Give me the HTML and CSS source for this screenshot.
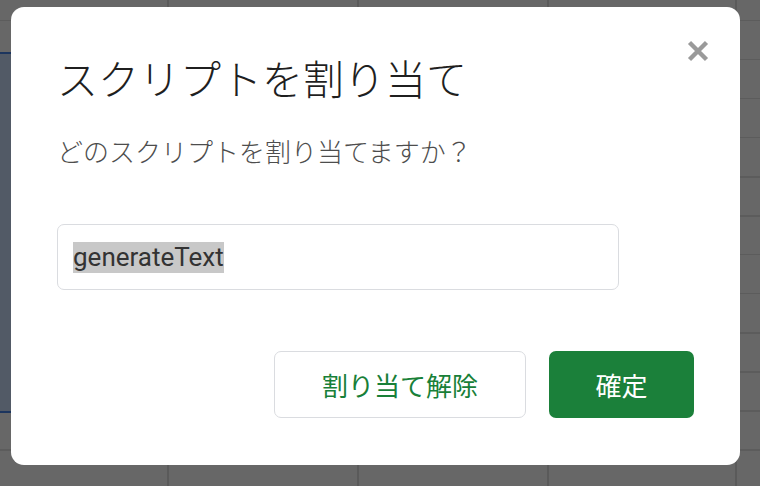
FILE: index.html
```html
<!DOCTYPE html>
<html lang="ja">
<head>
<meta charset="utf-8">
<link rel="stylesheet" href="styles.css">
</head>
<body>
<div class="sheet">
  <div class="sheet-blue"></div>
</div>
<div class="dialog">
  <button class="close" aria-label="閉じる">
    <svg width="24" height="24" viewBox="0 0 24 24"><path d="M3.5 3.5 L20.5 20.5 M20.5 3.5 L3.5 20.5" stroke="#9a9a9a" stroke-width="4.4" stroke-linecap="butt"/></svg>
  </button>
  <h1 class="title">スクリプトを割り当て</h1>
  <p class="question">どのスクリプトを割り当てますか？</p>
  <div class="field"><span class="sel">generateText</span></div>
  <div class="actions">
    <button class="btn btn-outline">割り当て解除</button>
    <button class="btn btn-primary">確定</button>
  </div>
</div>
</body>
</html>
```
FILE: styles.css
```css
html, body {
  margin: 0;
  padding: 0;
  width: 760px;
  height: 486px;
  overflow: hidden;
}
body {
  background: #666666;
  font-family: "Noto Sans CJK JP", "Noto Sans", sans-serif;
  position: relative;
}
.sheet {
  position: absolute;
  inset: 0;
  background-color: #676767;
  background-image:
    linear-gradient(to right, transparent 167px, #5a5a5a 167px, #5a5a5a 169px, transparent 169px,
      transparent 357px, #5a5a5a 357px, #5a5a5a 359px, transparent 359px,
      transparent 547px, #5a5a5a 547px, #5a5a5a 549px, transparent 549px,
      transparent 735px, #5a5a5a 735px, #5a5a5a 737px, transparent 737px),
    repeating-linear-gradient(to bottom, transparent 0, transparent 20px, #5c5c5c 20px, #5c5c5c 21.5px, transparent 21.5px, transparent 39px);
  background-position: 0 0, 0 0;
}
.sheet-blue {
  position: absolute;
  left: 0;
  top: 52px;
  width: 14px;
  height: 361px;
  background: #525a66;
  border-top: 2px solid #1c355e;
  border-bottom: 2px solid #1c355e;
  box-sizing: border-box;
}
.dialog {
  position: absolute;
  left: 11px;
  top: 7px;
  width: 729px;
  height: 458px;
  background: #ffffff;
  border-radius: 13px;
  box-sizing: border-box;
  padding: 42px 46px 0 46px;
  display: flex;
  flex-direction: column;
}
.close {
  position: absolute;
  right: 30px;
  top: 32px;
  width: 24px;
  height: 24px;
  padding: 0;
  border: 0;
  background: none;
  filter: blur(0.7px);
}
.close svg { display: block; }
.title {
  margin: 0;
  font-size: 41px;
  font-weight: 300;
  line-height: 56px;
  color: #1f1f1f;
  letter-spacing: 0;
}
.question {
  margin: 28px 0 0 0;
  font-size: 26px;
  line-height: 36px;
  color: #4d4d4d;
  font-weight: 300;
}
.field {
  margin-top: 55px;
  width: 562px;
  height: 66px;
  border: 1px solid #dadce0;
  border-radius: 7px;
  box-sizing: border-box;
  display: flex;
  align-items: center;
  padding-left: 15px;
  font-family: Roboto, "Noto Sans", sans-serif;
  font-size: 26px;
  color: #333333;
}
.sel {
  background: #c8c8c8;
  line-height: 31px;
}
.actions {
  margin-top: 61px;
  display: flex;
  justify-content: flex-end;
  gap: 23px;
}
.btn {
  height: 67px;
  border-radius: 7px;
  font-family: "Noto Sans CJK JP", "Noto Sans", sans-serif;
  font-size: 26px;
  font-weight: 400;
  padding: 0;
  box-sizing: border-box;
  cursor: pointer;
}
.btn-outline {
  width: 252px;
  background: #ffffff;
  border: 1px solid #dadce0;
  color: #188038;
}
.btn-primary {
  width: 145px;
  background: #1b803a;
  border: 0;
  color: #ffffff;
}
```
